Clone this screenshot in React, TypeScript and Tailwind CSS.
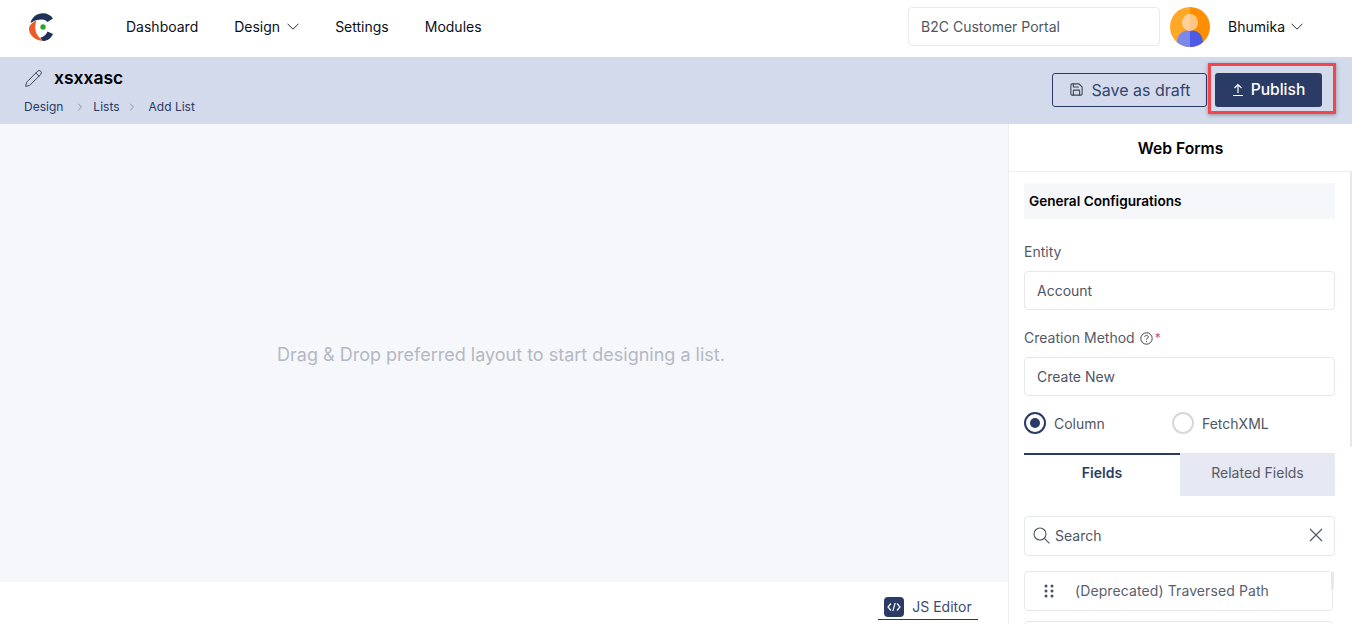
import { ChevronRight, Pencil, Save } from "lucide-react";

const navText = "text-[14px] text-[#0b0f1a]";

function Caret() {
  return (
    <svg width="12" height="7" viewBox="0 0 12 7" fill="none" stroke="#2a2f3a" strokeWidth="1">
      <path d="M0.5 0.7L6 6.2L11.5 0.7" />
    </svg>
  );
}

function Logo() {
  return (
    <svg width="24" height="28" viewBox="0 0 24 28" fill="none">
      <path d="M1.5 10 C3 4 8 0.3 14 0.3 C18 0.3 22 2.3 24 5.5 L18.5 9 C17 7.3 15 6.5 13 6.5 C8.5 6.5 5 7.5 1.5 10 Z" fill="#1f3158" />
      <path d="M7.5 7.5 C3 9.5 0 12.5 0 16 C0 22 6 27.5 14 28 C11 25 7 22 6.4 16.5 C6 13 6.4 10.5 7.5 7.5 Z" fill="#ee5b24" />
      <path d="M24 21 C22 25.5 18 28 14 28 C13 27 12 26 11.2 24.5 C14 24.5 17 22 18.5 18.5 Z" fill="#1f3158" />
      <circle cx="14" cy="14" r="2.7" fill="#2aa52f" />
    </svg>
  );
}

function Avatar() {
  return (
    <svg width="40" height="40" viewBox="0 0 40 40">
      <clipPath id="avatar-clip">
        <circle cx="20" cy="20" r="20" />
      </clipPath>
      <g clipPath="url(#avatar-clip)">
        <rect width="20" height="40" fill="#ffa726" />
        <rect x="20" width="20" height="40" fill="#ff8f00" />
        <path d="M20 23 C12 23 7 28 7 36 L7 40 L20 40 Z" fill="#7b88ea" />
        <path d="M20 23 C28 23 33 28 33 36 L33 40 L20 40 Z" fill="#4d5ce6" />
        <path d="M20 7 A8 8.5 0 0 0 20 24 Z" fill="#ffd09b" />
        <path d="M20 7 A8 8.5 0 0 1 20 24 Z" fill="#ffc582" />
      </g>
    </svg>
  );
}

function Field({ value }: { value: string }) {
  return (
    <div className="flex h-[39px] items-center rounded border border-[#e6e8f0] bg-white px-[12px] text-[14px] text-[#4f5563]">
      {value}
    </div>
  );
}

export default function App() {
  return (
    <div className="flex h-[624px] w-[1352px] flex-col overflow-hidden bg-white font-['Inter',sans-serif]">
      <header className="flex h-[57px] shrink-0 items-center pb-1 pl-[29px]">
        <Logo />
        <nav className="ml-[73px] flex items-center gap-9">
          <span className={navText}>Dashboard</span>
          <span className={`flex items-center gap-[7px] ${navText}`}>
            Design <Caret />
          </span>
          <span className={navText}>Settings</span>
          <span className={navText}>Modules</span>
        </nav>
        <div className="ml-auto flex items-center">
          <div className="flex h-[39px] w-[252px] items-center rounded border border-[#e8e9f2] pl-[12px] text-[14px] text-[#4f5563]">
            B2C Customer Portal
          </div>
          <div className="ml-[10px]">
            <Avatar />
          </div>
          <span className={`ml-[18px] flex items-center gap-[6px] ${navText}`}>
            Bhumika <Caret />
          </span>
          <div className="w-[49px]" />
        </div>
      </header>

      <div className="flex h-[67px] shrink-0 items-center justify-between bg-[#d2daec] pl-[24px] pr-[30px]">
        <div>
          <div className="flex items-center gap-[11px]">
            <Pencil size={19} strokeWidth={1.25} className="text-[#3f444f]" />
            <span className="text-[17.5px] font-semibold leading-6 text-black">xsxxasc</span>
          </div>
          <div className="mt-[9px] flex items-center text-[12px] leading-4 text-[#2b3a63]">
            <span>Design</span>
            <ChevronRight size={12} strokeWidth={1.25} className="ml-[11px] mr-[7px] text-[#5f667a]" />
            <span>Lists</span>
            <ChevronRight size={12} strokeWidth={1.25} className="ml-[6px] mr-[11px] text-[#5f667a]" />
            <span>Add List</span>
          </div>
        </div>
        <div className="mb-[2px] flex items-center gap-2">
          <button className="flex h-[34px] w-[155px] items-center justify-center gap-[8px] rounded-[3px] border border-[#2a3b66] text-[16px] text-[#35456e]">
            <Save size={15} strokeWidth={1.75} className="text-[#3f444f]" /> Save as draft
          </button>
          <div className="relative">
            <button className="flex h-[34px] w-[107px] items-center justify-center gap-[7px] rounded-[3px] bg-[#2a3b66] text-[15.6px] font-medium text-white">
              <svg width="12" height="14" viewBox="0 0 12 14" fill="none" stroke="white" strokeWidth="1.2">
                <path d="M6 10V1.5M2.5 5L6 1.5L9.5 5M1 12.5H11" />
              </svg>
              Publish
            </button>
            <div className="absolute left-[-7px] top-[-10px] h-[51px] w-[128px] border-[3px] border-[#f4444c] shadow-[0_1px_4px_rgba(0,0,0,0.35)]" />
          </div>
        </div>
      </div>

      <div className="flex min-h-0 flex-1">
        <main className="flex w-[1008px] shrink-0 flex-col">
          <div className="flex flex-1 items-center justify-center bg-[#f6f7fb] text-[18px] text-[#b4b8c2]">
            <span className="mr-[6px] mt-[2px]">Drag &amp; Drop preferred layout to start designing a list.</span>
          </div>
          <div className="flex h-[42px] shrink-0 justify-end pr-[30px]">
            <div className="mt-[15px] flex h-[23px] w-[100px] items-start justify-center gap-[8px] border-b border-[#2a3b66] text-[14px] text-[#3b4a72]">
              <span className="flex h-[20px] w-[20px] items-center justify-center rounded bg-[#2a3b66] text-white">
                <svg width="14" height="10" viewBox="0 0 14 10" fill="none" stroke="white" strokeWidth="1.2">
                  <path d="M4 1.5L1 5L4 8.5M10 1.5L13 5L10 8.5M8.2 0.8L5.8 9.2" />
                </svg>
              </span>
              <span className="leading-[20px]">JS Editor</span>
            </div>
          </div>
        </main>

        <aside className="relative w-[344px] shrink-0 border-l border-[#eceef4] bg-white">
          <div className="flex h-[48px] items-center justify-center border-b border-[#eceef4] pt-[2px] text-[15.7px] font-semibold text-black">
            Web Forms
          </div>
          {/* scrollbar thumb on the panel edge */}
          <div className="absolute right-0 top-[48px] h-[275px] w-[2px] bg-[#e6e8f0]" />
          <div className="px-[15px] pr-[17px] pt-[11px]">
            <div className="flex h-[36px] items-center bg-[#f6f7fb] pl-[5px] text-[13.6px] font-semibold text-black">
              General Configurations
            </div>
            <div className="mt-[24px] text-[14px] leading-[18px] text-[#555a66]">Entity</div>
            <div className="mt-[10px]">
              <Field value="Account" />
            </div>
            <div className="mt-[19px] flex items-center text-[14px] leading-[18px] text-[#555a66]">
              Creation Method
              <svg width="13" height="13" viewBox="0 0 13 13" fill="none" stroke="#3f444f" strokeWidth="1" className="ml-[5px]">
                <circle cx="6.5" cy="6.5" r="5.7" />
                <path d="M4.7 5C4.7 2.8 8.3 3 8.3 5C8.3 6.3 6.5 6.2 6.5 7.7M6.5 8.9V9.9" />
              </svg>
              <span className="ml-[2px] text-[12px] text-[#e2456f]">*</span>
            </div>
            <div className="mt-[10px]">
              <Field value="Create New" />
            </div>
            <div className="mt-[16px] flex h-[22px] items-center text-[14px] text-[#4f5563]">
              <span className="flex h-[22px] w-[22px] items-center justify-center rounded-full border-2 border-[#2a3b66]">
                <span className="h-[10px] w-[10px] rounded-full bg-[#2a3b66]" />
              </span>
              <span className="ml-[8px] w-[118px]">Column</span>
              <span className="h-[22px] w-[22px] rounded-full border-2 border-[#d5d7dd]" />
              <span className="ml-[8px]">FetchXML</span>
            </div>
            <div className="mt-[19px] flex h-[43px] text-[14px]">
              <div className="flex w-[156px] items-center justify-center border-t-2 border-[#2a3b66] pb-[6px] font-semibold text-[#2a3b66]">
                Fields
              </div>
              <div className="flex flex-1 items-center justify-center bg-[#e6e9f3] pb-[4px] text-[#555a66]">
                Related Fields
              </div>
            </div>
            <div className="mt-[20px] flex h-[40px] items-center rounded border border-[#e6e8f0] pb-[2px] pl-[8px] pr-[11px] text-[14px] text-[#4f5563]">
              <svg width="17" height="17" viewBox="0 0 17 17" fill="none" stroke="#4f5563" strokeWidth="1.1">
                <circle cx="7" cy="7" r="6" />
                <path d="M11.4 11.4L16.4 16.4" />
              </svg>
              <span className="ml-[5px] flex-1">Search</span>
              <svg width="14" height="14" viewBox="0 0 14 14" fill="none" stroke="#4f5563" strokeWidth="1.1">
                <path d="M1 1L13 13M13 1L1 13" />
              </svg>
            </div>
            <div className="relative mr-[2px] mt-[15px] flex h-[40px] items-center rounded border border-[#e6e8f0] pb-[2px] pl-[18px] text-[14px] tracking-[0.1px] text-[#5a6070]">
              <svg width="10" height="14" viewBox="0 0 10 14" fill="#4a5068" className="ml-[1px] mt-[2px]">
                <circle cx="2" cy="2" r="1.5" />
                <circle cx="8" cy="2" r="1.5" />
                <circle cx="2" cy="7" r="1.5" />
                <circle cx="8" cy="7" r="1.5" />
                <circle cx="2" cy="12" r="1.5" />
                <circle cx="8" cy="12" r="1.5" />
              </svg>
              <span className="ml-[21px]">(Deprecated) Traversed Path</span>
              {/* list scrollbar thumb */}
              <div className="absolute right-[-2px] top-0 h-[17px] w-[3px] bg-[#e6e8f0]" />
            </div>
            <div className="mr-[2px] mt-[10px] h-[40px] rounded border border-[#e6e8f0]" />
          </div>
        </aside>
      </div>
    </div>
  );
}
